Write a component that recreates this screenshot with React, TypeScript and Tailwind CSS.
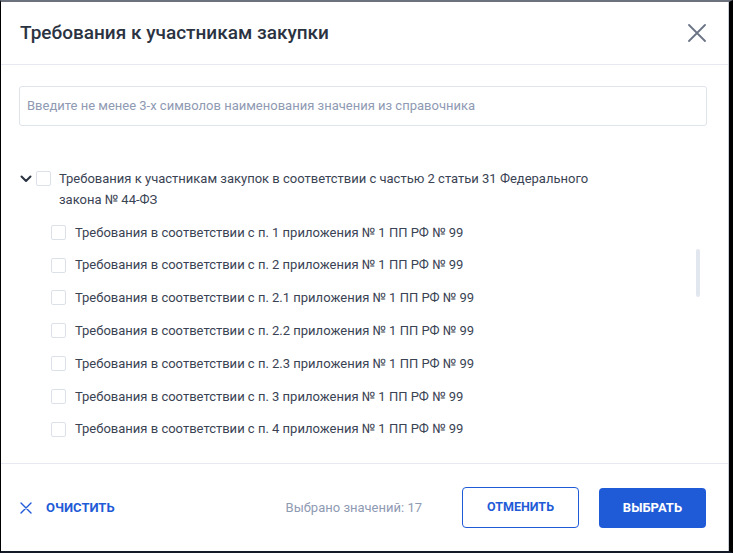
import React from "react";

const items = ["1", "2", "2.1", "2.2", "2.3", "3", "4"];

const Checkbox = () => (
  <span className="inline-block h-[15px] w-[15px] shrink-0 rounded-[2px] border border-[#dce1e9] bg-white" />
);

const App = () => {
  return (
    <div
      className="h-[553px] w-[733px] overflow-hidden border-t-2 border-l border-r-4 border-b-2 border-t-[#6b717d] border-l-black border-r-black border-b-[#151a28] bg-white"
      style={{ fontFamily: "Roboto, 'Noto Sans', sans-serif" }}
    >
      <div className="flex h-full flex-col border-r border-r-[#c9cdd5]">
        {/* header */}
        <div className="flex h-[63px] shrink-0 items-center justify-between border-b border-[#e6e9ef] pl-[19px] pr-[22px]">
          <h2 className="text-[19px] font-medium text-[#2b3342]">Требования к участникам закупки</h2>
          <svg width="18" height="18" viewBox="0 0 18 18" fill="none">
            <path d="M1 1L17 17M17 1L1 17" stroke="#6b7485" strokeWidth="1.8" strokeLinecap="round" />
          </svg>
        </div>

        {/* body */}
        <div className="relative flex-1 overflow-hidden">
          <div className="pl-[18px] pr-[21px] pt-[21px]">
            <div className="flex h-[40px] items-center rounded-[3px] border border-[#dfe3ea] px-[7px] text-[13px] text-[#8f9ab3]">
              Введите не менее 3-х символов наименования значения из справочника
            </div>
          </div>

          <div className="pt-[42px] pl-[19px] pr-[40px]">
            <div className="flex items-start">
              <svg width="12" height="8" viewBox="0 0 12 8" className="mt-[7px] shrink-0" fill="none">
                <path d="M1.5 1.5L6 6L10.5 1.5" stroke="#2b3342" strokeWidth="2" strokeLinecap="round" strokeLinejoin="round" />
              </svg>
              <span className="ml-[4px] mt-[1px]">
                <Checkbox />
              </span>
              <span className="ml-[8px] max-w-[540px] text-[13px] leading-[21px] text-[#3a4354]">
                Требования к участникам закупок в соответствии с частью 2 статьи 31 Федерального закона № 44-ФЗ
              </span>
            </div>
            <div className="mt-[6px] pl-[31px]">
              {items.map((n) => (
                <div key={n} className="flex h-[32.8px] items-center">
                  <Checkbox />
                  <span className="ml-[9px] text-[13px] text-[#3a4354]">
                    Требования в соответствии с п. {n} приложения № 1 ПП РФ № 99
                  </span>
                </div>
              ))}
            </div>
          </div>

          <div className="absolute top-[184px] left-[695px] h-[48px] w-[4px] rounded-full bg-[#e2e7ef]" />
        </div>

        {/* footer */}
        <div className="flex h-[88px] shrink-0 items-center border-t border-[#e6e9ef] pl-[19px] pr-[22px]">
          <button className="flex items-center gap-[14px] text-[13px] font-bold text-[#1f5bd7]">
            <svg width="12" height="12" viewBox="0 0 12 12" fill="none">
              <path d="M1 1L11 11M11 1L1 11" stroke="#1f5bd7" strokeWidth="1.4" strokeLinecap="round" />
            </svg>
            ОЧИСТИТЬ
          </button>
          <span className="ml-auto text-[13px] text-[#8f9ab3]">Выбрано значений: 17</span>
          <button className="ml-[40px] h-[41px] w-[117px] rounded-[4px] border border-[#1f5bd7] text-[12.5px] font-bold text-[#1f5bd7]">
            ОТМЕНИТЬ
          </button>
          <button className="ml-[20px] h-[40px] w-[107px] rounded-[4px] bg-[#1f5bd7] text-[13px] font-bold text-white">
            ВЫБРАТЬ
          </button>
        </div>
      </div>
    </div>
  );
};

export default App;
